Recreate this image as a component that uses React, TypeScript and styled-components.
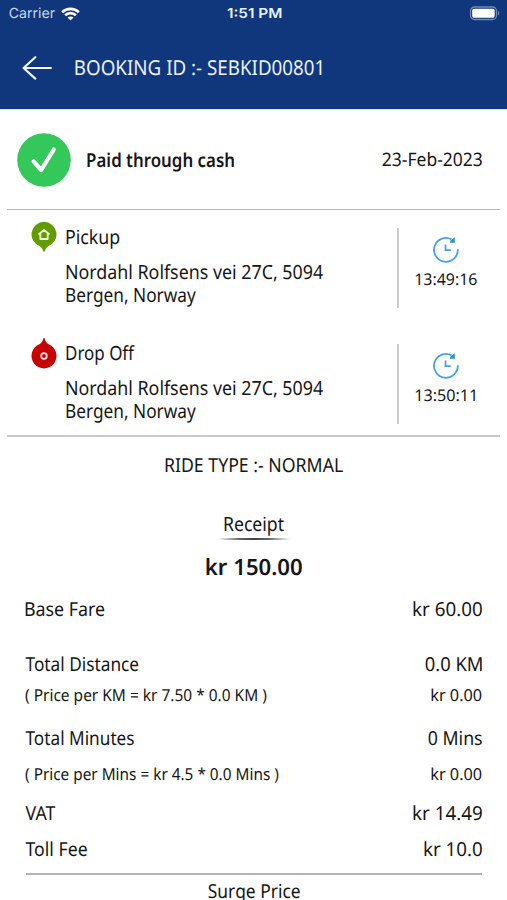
import React, { useLayoutEffect, useRef, useState } from "react";
import styled, { createGlobalStyle } from "styled-components";

const GlobalStyle = createGlobalStyle`
  * { box-sizing: border-box; }
  html, body { margin: 0; padding: 0; background: #fff; overflow: hidden; }
`;

const Screen = styled.div`
  width: 507px;
  height: 900px;
  overflow: hidden;
  display: flex;
  flex-direction: column;
  background: #fff;
  color: #161616;
  font-family: "Noto Sans", sans-serif;
  text-rendering: geometricPrecision;
`;

const FitBox = styled.span<{ $w: number; $line: number }>`
  display: block;
  flex: none;
  width: ${(p) => p.$w}px;
  height: ${(p) => p.$line}px;
`;

const FitInner = styled.span<{ $size: number; $weight: number; $family: string; $line: number }>`
  display: block;
  width: max-content;
  white-space: nowrap;
  line-height: ${(p) => p.$line}px;
  transform-origin: 0 50%;
  font-family: ${(p) => p.$family};
  font-size: ${(p) => p.$size}px;
  font-weight: ${(p) => p.$weight};
`;

type FitProps = {
  children: string;
  w: number;
  size?: number;
  weight?: number;
  family?: string;
  line?: number;
};

/* Condenses a line of text so that its visible glyphs span `w` pixels. */
function Fit({
  children,
  w,
  size = 19.5,
  weight = 400,
  family = '"Noto Sans", sans-serif',
  line = 24,
}: FitProps) {
  const ref = useRef<HTMLSpanElement>(null);
  const [transform, setTransform] = useState("none");
  useLayoutEffect(() => {
    const ctx = document.createElement("canvas").getContext("2d");
    if (!ctx || !ref.current) return;
    ctx.font = `${weight} ${size * 10}px ${family}`;
    const m = ctx.measureText(children);
    const left = -m.actualBoundingBoxLeft / 10;
    const right = (m.width - m.actualBoundingBoxRight) / 10;
    const advance = parseFloat(getComputedStyle(ref.current).width);
    const scale = (w - 0.8) / (advance - left - right);
    setTransform(`translateX(${0.6 - left * scale}px) scaleX(${scale})`);
  }, [children, w, size, weight, family]);
  return (
    <FitBox $w={w} $line={line}>
      <FitInner ref={ref} $size={size} $weight={weight} $family={family} $line={line} style={{ transform }}>
        {children}
      </FitInner>
    </FitBox>
  );
}

const Header = styled.header`
  flex: none;
  height: 110px;
  background: #10377b;
  border-bottom: 1px solid #d6e2fb;
  color: #e9f0ff;
`;

const StatusBar = styled.div`
  display: grid;
  grid-template-columns: 1fr auto 1fr;
  align-items: center;
  height: 27px;
  padding: 0 7px 0 8.5px;
`;

const StatusLeft = styled.div`
  display: flex;
  align-items: center;
  gap: 6.5px;
  color: #c9d7f2;
`;

const StatusRight = styled.div`
  display: flex;
  justify-content: flex-end;
`;

const TitleBar = styled.div`
  display: flex;
  align-items: center;
  gap: 23px;
  height: 81px;
  padding-left: 22px;
`;

const PaidRow = styled.section`
  flex: none;
  display: flex;
  align-items: center;
  height: 99px;
  padding: 0 25px 0 17px;
`;

const PaidLabel = styled.div`
  flex: 1;
  padding-left: 16px;
`;

const PaidTexts = styled.div`
  flex: 1;
  display: flex;
`;

const Divider = styled.hr<{ $inset: number; $color: string; $h: number }>`
  flex: none;
  width: auto;
  height: ${(p) => p.$h}px;
  margin: 0 ${(p) => p.$inset}px;
  border: 0;
  background: ${(p) => p.$color};
`;

const Stops = styled.section`
  flex: none;
  height: 225px;
  padding-top: 10px;
`;

const Stop = styled.div`
  display: flex;
  height: 116px;
`;

const PinCell = styled.div`
  width: 65.5px;
  padding: 1px 0 0 31px;
`;

const StopText = styled.div`
  width: 331.5px;
  padding-top: 5px;
`;

const Address = styled.div`
  display: flex;
  flex-direction: column;
  margin-top: 11px;
`;

const TimeCell = styled.div`
  display: flex;
  flex-direction: column;
  align-items: center;
  width: 96px;
  height: 80px;
  margin-top: 8px;
  padding-top: 8px;
  border-left: 2px solid #cbcbcb;
`;

const TimeText = styled.div`
  width: 62.5px;
  margin-top: 3px;
`;

const Centered = styled.div<{ $top: number }>`
  flex: none;
  display: flex;
  justify-content: center;
  height: 24px;
  margin-top: ${(p) => p.$top}px;
`;

const TitleUnderline = styled.div`
  flex: none;
  align-self: center;
  width: 72px;
  height: 2px;
  margin-top: 2px;
  background: linear-gradient(90deg, transparent, #666 30%, #444 50%, #666 70%, transparent);
`;

const FareRow = styled.div<{ $top: number }>`
  flex: none;
  display: flex;
  justify-content: space-between;
  height: 24px;
  margin-top: ${(p) => p.$top}px;
  padding: 0 25.5px 0 25px;
`;

const Icon = styled.svg`
  display: block;
  flex: none;
`;

const WifiIcon = () => (
  <Icon width="19" height="14" viewBox="0 0 19 14" fill="none" stroke="#fff" strokeWidth="2.6">
    <path d="M1.1 5.2C5.9.7 13.1.7 17.9 5.2" />
    <path d="M4.1 8.3c3-2.9 7.8-2.9 10.8 0" />
    <path d="M6.5 10.6c1.7-1.6 4.3-1.6 6 0l-3 3z" fill="#fff" stroke="none" />
  </Icon>
);

const BatteryIcon = () => (
  <Icon width="31" height="15" viewBox="0 0 31 15">
    <rect x="1.5" y="1" width="26" height="12.5" rx="4" fill="none" stroke="#7188b4" strokeWidth="1.3" />
    <rect x="3.2" y="2.7" width="22.5" height="9" rx="1.7" fill="#fff" />
    <path d="M29 5.1c1.7.6 1.7 3.8 0 4.4z" fill="#7188b4" />
  </Icon>
);

const BackIcon = () => (
  <Icon width="30" height="24" viewBox="0 0 30 24" fill="none" stroke="#f1f5ff" strokeWidth="2.2" strokeLinecap="round" strokeLinejoin="round">
    <path d="M28.9 12H1.6M13.3 1.2L1.6 12l11.7 10.6" />
  </Icon>
);

const PaidIcon = () => (
  <Icon width="54" height="54" viewBox="0 0 54 54">
    <circle cx="27" cy="27" r="26.8" fill="#34c759" />
    <path d="M16.6 28.3l7.6 8.7L36.8 16.5" fill="none" stroke="#fff" strokeWidth="4.2" strokeLinecap="round" strokeLinejoin="round" />
  </Icon>
);

const PickupIcon = () => (
  <Icon width="26" height="32" viewBox="0 0 26 32">
    <path d="M13 .8a12.5 12.5 0 0 1 4.6 24.1c-2 .9-3.2 3.2-4.2 5.9h-.8c-1-2.7-2.2-5-4.2-5.9A12.5 12.5 0 0 1 13 .8z" fill="#629b04" />
    <path d="M7.5 13.5L13 9l5.5 4.5M9.3 12.5v5.5h7.4v-5.5" fill="none" stroke="#e9f5d5" strokeWidth="1.8" strokeLinejoin="round" />
  </Icon>
);

const DropIcon = () => (
  <Icon width="26" height="32" viewBox="0 0 26 32">
    <path d="M12.6 1.1h.8c.8 2.6 2 5.3 4.2 6.2a12.5 12.5 0 1 1-9.2 0C10.6 6.4 11.8 3.7 12.6 1.1z" fill="#c70404" />
    <circle cx="13" cy="19" r="2.8" fill="none" stroke="#ffdada" strokeWidth="1.8" />
  </Icon>
);

const ClockIcon = () => (
  <Icon width="28" height="28" viewBox="0 0 28 28" fill="none" stroke="#48a3e4">
    <path d="M25.8 13.2A11.9 11.9 0 1 1 19.5 3.4" strokeWidth="1.8" />
    <path d="M22.8 1.2v5.6h-5l.8-2.6z" fill="#2a91dc" stroke="none" />
    <path d="M13.5 8.5v5.7h5.3" strokeWidth="1.8" />
  </Icon>
);

const stops = [
  { title: "Pickup", titleWidth: 53.5, time: "13:49:16", timeWidth: 62, Pin: PickupIcon },
  { title: "Drop Off", titleWidth: 69, time: "13:50:11", timeWidth: 60, Pin: DropIcon },
];

const fares = [
  { top: 18.5, label: "Base Fare", lw: 79.5, value: "kr 60.00", vw: 69, size: 19.3 },
  { top: 31, label: "Total Distance", lw: 113.5, value: "0.0 KM", vw: 57, size: 19.3 },
  { top: 7, label: "( Price per KM = kr 7.50 * 0.0 KM )", lw: 241.5, value: "kr 0.00", vw: 50.5, size: 16.6 },
  { top: 18.5, label: "Total Minutes", lw: 109, value: "0 Mins", vw: 54, size: 19.3 },
  { top: 12.5, label: "( Price per Mins = kr 4.5 * 0.0 Mins )", lw: 253.5, value: "kr 0.00", vw: 50.5, size: 16.6 },
  { top: 15, label: "VAT", lw: 30.5, value: "kr 14.49", vw: 69, size: 19.3 },
  { top: 12, label: "Toll Fee", lw: 62, value: "kr 10.0", vw: 58, size: 19.3 },
];

const BottomRule = styled(Divider)`
  margin-top: 12px;
`;

export default function App() {
  return (
    <Screen>
      <GlobalStyle />
      <Header>
        <StatusBar>
          <StatusLeft>
            <Fit w={46} size={14} family="Inter, sans-serif">Carrier</Fit>
            <WifiIcon />
          </StatusLeft>
          <Fit w={54.5} size={13.6} weight={600} family="Inter, sans-serif">1:51 PM</Fit>
          <StatusRight>
            <BatteryIcon />
          </StatusRight>
        </StatusBar>
        <TitleBar>
          <BackIcon />
          <Fit w={246.5} size={20.6}>BOOKING ID :- SEBKID00801</Fit>
        </TitleBar>
      </Header>

      <PaidRow>
        <PaidIcon />
        <PaidTexts>
          <PaidLabel>
            <Fit w={147} size={19.2} weight={600}>Paid through cash</Fit>
          </PaidLabel>
          <Fit w={100} size={18.6}>23-Feb-2023</Fit>
        </PaidTexts>
      </PaidRow>
      <Divider $inset={7} $color="#b4b4b4" $h={1} />

      <Stops>
        {stops.map(({ title, titleWidth, time, timeWidth, Pin }) => (
          <Stop key={title}>
            <PinCell>
              <Pin />
            </PinCell>
            <StopText>
              <Fit w={titleWidth}>{title}</Fit>
              <Address>
                <Fit w={257} line={23}>Nordahl Rolfsens vei 27C, 5094</Fit>
                <Fit w={130} line={23}>Bergen, Norway</Fit>
              </Address>
            </StopText>
            <TimeCell>
              <ClockIcon />
              <TimeText>
                <Fit w={timeWidth} size={16.2}>{time}</Fit>
              </TimeText>
            </TimeCell>
          </Stop>
        ))}
      </Stops>
      <Divider $inset={7} $color="#c8c8c8" $h={2} />

      <Centered $top={16}>
        <Fit w={178} size={19.2}>RIDE TYPE :- NORMAL</Fit>
      </Centered>
      <Centered $top={35}>
        <Fit w={60}>Receipt</Fit>
      </Centered>
      <TitleUnderline />
      <Centered $top={14.5}>
        <Fit w={96} size={22.4} weight={600}>kr 150.00</Fit>
      </Centered>

      {fares.map((f, i) => (
        <FareRow key={i} $top={f.top}>
          <Fit w={f.lw} size={f.size}>{f.label}</Fit>
          <Fit w={f.vw} size={f.size}>{f.value}</Fit>
        </FareRow>
      ))}
      <BottomRule $inset={25.5} $color="#b4b4b4" $h={2} />
      <Centered $top={4}>
        <Fit w={92} size={19.3}>Surge Price</Fit>
      </Centered>
    </Screen>
  );
}
